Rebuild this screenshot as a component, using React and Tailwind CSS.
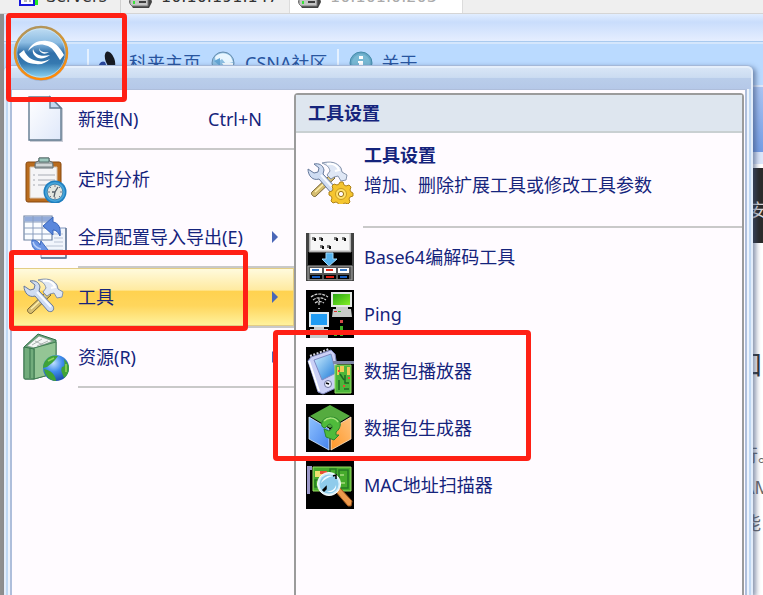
// Application menu of a network analyser, opened over its main window.

function LogoOrb() {
  return (
    <svg viewBox="0 0 56 56" className="h-14 w-14" aria-hidden="true">
      <defs>
        <linearGradient id="ring" x1="0" y1="0" x2="0.2" y2="1">
          <stop offset="0" stopColor="#a89466" />
          <stop offset="0.45" stopColor="#d9962e" />
          <stop offset="1" stopColor="#ff8a0a" />
        </linearGradient>
        <linearGradient id="orb" x1="0" y1="0" x2="0" y2="1">
          <stop offset="0" stopColor="#c3dff4" />
          <stop offset="0.3" stopColor="#8cbce2" />
          <stop offset="0.5" stopColor="#2f6fa9" />
          <stop offset="0.7" stopColor="#3579b0" />
          <stop offset="1" stopColor="#93dcf8" />
        </linearGradient>
      </defs>
      <circle cx="28" cy="29" r="27" fill="#6c7f9c" opacity="0.35" />
      <circle cx="28" cy="28" r="26" fill="url(#orb)" stroke="url(#ring)" strokeWidth="2.5" />
      <circle cx="28" cy="28" r="24.2" fill="none" stroke="#d6ecfa" strokeWidth="0.8" opacity="0.7" />
      <path d="M15 26C18 18 26 15 34 16c8 1 12 5 17 14l-4 5c-4-6-6-11-12-14-7-3-14-2-20 5z" fill="#fff" />
      <path d="M6 29l5-4c2 6 7 10 14 11 4 1 8 0 12-2-4 4-9 6-14 5-8 0-14-4-17-10z" fill="#fff" />
      <path d="M20 24c2 6 8 8 17 6-4 3-8 4-12 3-4-2-6-5-5-9z" fill="#fff" />
      <path d="M26 23c1 4 5 5 10 4-3 2-5 2-7 1-2-1-3-3-3-5z" fill="#fff" />
    </svg>
  );
}

function PageIcon() {
  return (
    <svg viewBox="0 0 48 48" className="h-12 w-12 shrink-0" aria-hidden="true">
      <defs>
        <linearGradient id="paper" x1="0" y1="0" x2="1" y2="1">
          <stop offset="0" stopColor="#fff" />
          <stop offset="1" stopColor="#dfe8fa" />
        </linearGradient>
      </defs>
      <path d="M8 3h20l13 11v33H8z" fill="#c9ccd6" />
      <path d="M7 2h21l11 11v32H7z" fill="url(#paper)" stroke="#61798f" strokeWidth="1.4" />
      <path d="M28 2v11h11z" fill="#c4d8ee" stroke="#61798f" strokeWidth="1.4" />
    </svg>
  );
}

function ClipboardIcon() {
  return (
    <svg viewBox="0 0 48 48" className="h-12 w-12 shrink-0" aria-hidden="true">
      <rect x="4" y="7" width="35" height="40" rx="2" fill="#b96b1e" stroke="#87480f" />
      <path d="M8 12h27v31H8z" fill="#f5f5f7" stroke="#d7c3ad" />
      <path d="M16 20h17M16 25h17M16 30h15M11 20h2M11 25h2M11 30h2" stroke="#a7abb3" strokeWidth="1" />
      <path d="M13 9c0-3 4-2 4-4V3h10v2c0 2 4 1 4 4v4H13z" fill="#a2aaab" stroke="#626c70" />
      <path d="M17 3h10v4H17z" fill="#9dc7bd" stroke="#56706f" />
      <path d="M14 10h16" stroke="#e2e6e7" strokeWidth="1.5" />
      <circle cx="33" cy="37" r="11.5" fill="#1f7fc0" />
      <circle cx="33" cy="37" r="10" fill="#48a5da" />
      <circle cx="33" cy="37" r="7.8" fill="#e3e6e0" stroke="#1f6f9f" strokeWidth="0.7" />
      <path d="M33 30v2M33 42v2M26 37h2M38 37h2M28 32l1 1M38 32l-1 1M28 42l1-1M38 42l-1-1" stroke="#778" />
      <path d="M36 32l-3 5-1 5M33 37h-3" stroke="#555f68" strokeWidth="1.3" fill="none" />
    </svg>
  );
}

function TableExchangeIcon() {
  return (
    <svg viewBox="0 0 48 48" className="h-12 w-12 shrink-0" aria-hidden="true">
      <path d="M19 15h25v30H19z" fill="#f1f5fc" stroke="#8096bd" />
      <path d="M19 45h25V15" fill="none" stroke="#5e7390" strokeWidth="1.4" />
      <path d="M32 21h9M32 25h9M32 29h9M24 33h17M24 37h17M28 41h13" stroke="#b9c3d4" strokeWidth="1.2" />
      <path d="M2 3h28v24H2z" fill="#fafcff" stroke="#7084a2" strokeWidth="1.2" />
      <path d="M2.500 3.500h27v5h-27z" fill="#93abda" />
      <path d="M2 9h28M2 15h28M2 21h28M11 3v24M20 3v24" stroke="#8b9ebe" strokeWidth="1" />
      <path d="M21 13l10-9v5c6 1 8 6 7 14-2-4-4-6-7-6v5z" fill="#5a87dc" stroke="#3765ba" />
      <path d="M10 27c4 0 7 2 8 5l1-4 7 9-9 4-1-3c-4-1-7-5-6-11z" fill="#6b94e4" stroke="#3d6cc0" />
      <path d="M11 29c1 4 4 6 8 7" fill="none" stroke="#b8d0fa" strokeWidth="1.5" />
    </svg>
  );
}

// Crossed wrench and hammer, shared by the menu row and the settings entry.
function CrossedTools() {
  return (
    <>
      <path d="M25 18l4 4L10 40c-2 2-6-2-4-4z" fill="#d6bd70" stroke="#776434" />
      <path d="M9 36l14-13" stroke="#fff0ae" strokeWidth="1.5" />
      <path
        d="M16 7c8-2 15-1 19 5l1 4 5 3-1 5-5 1-3-5-4 1-3 2-4-4 3-4c-1-4-3-6-8-8z"
        fill="#dfe7f5"
        stroke="#8593ab"
      />
      <path d="M21 8c6-1 10 1 12 6l-4 1" fill="none" stroke="#fff" strokeWidth="2" />
      <path
        d="M2 13l6 4 4-1 1-4-5-4c5-1 9 1 10 6l-1 4 14 15c2 4-1 7-5 5L13 23c-6 2-11-3-11-10z"
        fill="#cfdcf2"
        stroke="#66799b"
      />
      <path d="M15 19l14 15" stroke="#f7faff" strokeWidth="2" />
    </>
  );
}

function ToolsIcon() {
  return (
    <svg viewBox="0 0 48 48" className="h-12 w-12 shrink-0" aria-hidden="true">
      <CrossedTools />
    </svg>
  );
}

function ToolSettingsIcon() {
  return (
    <svg viewBox="0 0 48 48" className="h-12 w-12 shrink-0" aria-hidden="true">
      <CrossedTools />
      <path
        d="M34 26h3l1 3 2 1 3-1 2 2-1 3 1 2 2 1v3l-3 1-1 2 1 3-2 2-3-1-2 1-1 2h-3l-1-3-2-1-3 1-2-2 1-3-1-2-2-1v-3l3-1 1-2-1-3 2-2 3 1 2-1z"
        fill="#f5c52f"
        stroke="#b08319"
      />
      <circle cx="35" cy="38" r="5.500" fill="#ffe168" stroke="#c99b20" />
      <circle cx="35" cy="38" r="2.6" fill="#fffafc" stroke="#9b7210" />
    </svg>
  );
}

function BookGlobeIcon() {
  return (
    <svg viewBox="0 0 48 48" className="h-12 w-12 shrink-0" aria-hidden="true">
      <defs>
        <radialGradient id="globe" cx="0.4" cy="0.3" r="0.7">
          <stop offset="0" stopColor="#bfe0ff" />
          <stop offset="0.5" stopColor="#3f8cec" />
          <stop offset="1" stopColor="#1c51ae" />
        </radialGradient>
      </defs>
      <path d="M2 14L16 1l18 6v33L12 46H3c-1 0-1-1-1-2z" fill="#69a578" stroke="#316d49" />
      <path d="M5 13L17 3l14 5-18 7z" fill="#f4f6f5" stroke="#7b9384" strokeWidth="0.7" />
      <path d="M10 12l10-6M15 13l11-5M13 8l10 5" stroke="#9aa3a0" strokeWidth="0.8" />
      <path d="M12 15l22-6v31l-22 6z" fill="#94c595" stroke="#437d55" />
      <path d="M2 14l10 2v30H3c-1 0-1-1-1-2zM8 15v30" fill="#72ac7c" stroke="#39754d" />
      <circle cx="34" cy="35" r="13" fill="url(#globe)" />
      <path d="M24 27c4-5 9-5 12-4l-3 4-3 3-5 4-4 1c0-3 1-6 3-8zM22 36c5 1 8 3 10 6 1 2 2 4 2 6-6 0-11-5-12-12zM42 26c3 3 5 6 5 9 0 4-2 8-5 10-1-4-4-7-2-11 3 0 3-3 2-8z" fill="#3fa338" />
      <path d="M26 28l6-3M44 31v8" stroke="#8ed45c" strokeWidth="1.6" />
    </svg>
  );
}

function Base64Icon() {
  return (
    <svg viewBox="0 0 48 48" className="h-12 w-12 shrink-0" aria-hidden="true">
      <path d="M0 0h48v48H0z" fill="#000" />
      <path d="M1 0v48M47 0v48" stroke="#858585" />
      <path d="M3 0h42v19H3z" fill="#d9d9d9" stroke="#8c8c8c" />
      <path d="M5 1h38v16H5z" fill="#f7f7f7" />
      <path d="M6 4h3v3H6zM13 4h3v3h-3zM28 4h3v3h-3zM36 4h3v3h-3zM14 12h3v3h-3zM21 12h3v3h-3z" fill="#777" />
      <path d="M8 5h2v3H8zM15 5h2v3h-2zM30 5h2v3h-2zM38 5h2v3h-2zM16 13h2v3h-2zM23 13h2v3h-2z" fill="#111" />
      <path d="M20 20h7v6h4l-8 7-7-7h4z" fill="#55b3ee" stroke="#a0d9fa" />
      <path d="M2 33h44v14H2z" fill="#555" stroke="#aaa" />
      <path d="M4 35h12v5H4zM18 35h12v5H18zM32 35h11v5H32z" fill="#fff" />
      <path d="M6 36h7v2H6zM34 36h7v2h-7z" fill="#3b7cca" />
      <path d="M20 36h7v2h-7z" fill="#e32e20" />
      <path d="M4 42h12v4H4zM18 42h12v4H18zM32 42h11v4H32z" fill="#000" />
      <path d="M6 43h8v2H6zM34 43h7v2h-7z" fill="#145cc0" />
      <path d="M20 43h8v2h-8z" fill="#df1f12" />
    </svg>
  );
}

function PingIcon() {
  return (
    <svg viewBox="0 0 48 48" className="h-12 w-12 shrink-0" aria-hidden="true">
      <defs>
        <linearGradient id="greenScreen" x1="0" y1="0" x2="1" y2="1">
          <stop offset="0" stopColor="#2ba713" />
          <stop offset="1" stopColor="#82ef27" />
        </linearGradient>
      </defs>
      <path d="M0 0h48v48H0z" fill="#000" />
      <path d="M5 7c5-4 12-4 17 0M7 10c4-3 9-3 13 0M9 13c3-2 6-2 9 0M13 8v7" fill="none" stroke="#d6d6d6" strokeWidth="1.2" strokeDasharray="3 1" />
      <path d="M12 18h2v1h-2z" fill="#999" />
      <path d="M25 2h21v15H25z" fill="#e4e8e4" />
      <path d="M27 4h17v11H27z" fill="url(#greenScreen)" />
      <path d="M30 17h12v2H30zM27 19h18l1 8H26z" fill="#c8cac8" />
      <path d="M28 21h3v1h-3z" fill="#df3029" />
      <path d="M32 21h3v1h-3z" fill="#37c030" />
      <path d="M3 22h20v15H3z" fill="#dce8ef" />
      <path d="M5 24h16v11H5z" fill="#209cf4" />
      <path d="M8 37h10v2H8zM4 39h18v9H4z" fill="#c7c9ca" />
      <path d="M34 30h3v3h-3z" fill="#d64a48" />
      <path d="M34 36h3v4h-3zM28 44h3v2h-3zM34 43h3v3h-3z" fill="#42b429" />
    </svg>
  );
}

function PacketPlayerIcon() {
  return (
    <svg viewBox="0 0 48 48" className="h-12 w-12 shrink-0" aria-hidden="true">
      <defs>
        <linearGradient id="pda" x1="0" y1="0" x2="1" y2="1">
          <stop offset="0" stopColor="#d0f0ff" />
          <stop offset="1" stopColor="#1b79d8" />
        </linearGradient>
      </defs>
      <path d="M0 0h48v48H0z" fill="#000" />
      <path d="M2 14l3-4L25 3l4 4 5 32-17 8-5-2z" fill="#cbd0f6" stroke="#7f86bd" />
      <path d="M3 14l10 30" stroke="#fff" strokeWidth="2" />
      <path d="M8 13l17-6 5 19-14 7z" fill="url(#pda)" stroke="#7c89c4" />
      <path d="M4 9l19-7" stroke="#d6d6e3" strokeWidth="2" strokeDasharray="2 1.500" />
      <circle cx="22" cy="37" r="3.500" fill="#eef0ff" stroke="#6a719b" />
      <path d="M20 36l3 1" stroke="#000" strokeWidth="1.5" />
      <path d="M27 14h21v3H27z" fill="#7e85a5" />
      <path d="M29 18h16v28H29z" fill="#4cb63a" stroke="#95dd65" />
      <path d="M34 19h4v6h-4zM41 20h3v8h-3zM31 20h2v8h-2z" fill="#efca55" />
      <path d="M33 33v10M39 28v8h4M34 27l4 6M38 42h5" fill="none" stroke="#1d6a24" strokeWidth="1.5" />
      <path d="M32 24h2M42 31h2M37 39h2" stroke="#e84936" strokeWidth="2" />
    </svg>
  );
}

function PacketBuilderIcon() {
  return (
    <svg viewBox="0 0 48 48" className="h-12 w-12 shrink-0" aria-hidden="true">
      <defs>
        <linearGradient id="cubeLeft" x1="0" y1="0" x2="1" y2="1">
          <stop offset="0" stopColor="#8fc2ff" />
          <stop offset="1" stopColor="#4583ec" />
        </linearGradient>
        <linearGradient id="cubeRight" x1="1" y1="0" x2="0" y2="1">
          <stop offset="0" stopColor="#ffc27c" />
          <stop offset="1" stopColor="#ff9626" />
        </linearGradient>
      </defs>
      <path d="M0 0h48v48H0z" fill="#000" />
      <path d="M24 1l20 11-20 12L4 12z" fill="#55ab3f" />
      <path d="M3 13l20 12v21L3 35z" fill="url(#cubeLeft)" stroke="#d9ecff" strokeWidth="0.8" />
      <path d="M45 13L25 25v21l20-11z" fill="url(#cubeRight)" stroke="#ffe9cc" strokeWidth="0.8" />
      <path
        d="M16 18c2-6 15-7 18 0 1 4-1 8-4 10v3h3l-5 5-8-3-2-8 5 2c4-2 4-6 1-7-3 0-3 4-6 4-2-1-3-3-2-6z"
        fill="#4fbb3b"
        stroke="#2b8430"
      />
      <path d="M18 17c4-4 11-4 14 1" fill="none" stroke="#a9e47c" strokeWidth="1.5" />
    </svg>
  );
}

function MacScannerIcon() {
  return (
    <svg viewBox="0 0 48 48" className="h-12 w-12 shrink-0" aria-hidden="true">
      <path d="M0 0h48v48H0z" fill="#000" />
      <path d="M1 5h3v28H1zM4 5h2v4H4z" fill="#9c98c9" />
      <path d="M7 6h38v24H7z" fill="#46ab2c" stroke="#9ddd63" />
      <path d="M9 10h9v6H9z" fill="#efe16f" />
      <path d="M14 10h7v3h-7z" fill="#e85235" />
      <path d="M33 9h9v18h-9zM9 19h8v7H9zM24 8h6v8h-6z" fill="none" stroke="#247a23" strokeWidth="1.5" />
      <path d="M34 14h4M35 22h4" stroke="#d9f2aa" />
      <path d="M30 31l4-4 12 13-1 5h-3z" fill="#ed9a4d" stroke="#9c541b" />
      <circle cx="23" cy="23" r="11.5" fill="#d3eefa" stroke="#fff" strokeWidth="1" />
      <circle cx="23" cy="23" r="9.500" fill="#8fcbeb" />
      <path d="M15 22c2-6 8-9 12-7-5 1-9 4-12 7zM20 30c5 1 9-2 10-6 1 5-4 9-10 6z" fill="#f1fbff" />
      <path d="M27 15l3-1v4M17 29l3-3v2l-2 2z" fill="none" stroke="#000" strokeWidth="1.5" />
    </svg>
  );
}

function DriveIcon() {
  return (
    <svg viewBox="0 0 24 20" className="h-5 w-6 shrink-0" aria-hidden="true">
      <path d="M3 5h18l2 8-3 6H4l-4-6z" fill="#444" />
      <path d="M1 10h18v7H3l-2-2z" fill="#c5c5c5" stroke="#777" />
      <path d="M10 13h7" stroke="#111" strokeWidth="1.5" />
      <path d="M4 12h2v3H4z" fill="#38e438" />
    </svg>
  );
}

function ServersIcon() {
  return (
    <svg viewBox="0 0 24 20" className="h-5 w-6 shrink-0" aria-hidden="true">
      <path d="M2 4h14v12H2z" fill="#fff" stroke="#1717dc" strokeWidth="2" />
      <path d="M6 12h3M11 12h2" stroke="#777" />
      <path d="M17 11h3v5h-3z" fill="#20e824" />
    </svg>
  );
}

function HomeLinkIcon() {
  return (
    <svg viewBox="0 0 24 24" className="h-6 w-6 shrink-0" aria-hidden="true">
      <ellipse cx="13" cy="9" rx="4.500" ry="9" fill="#171b22" transform="rotate(-20 13 9)" />
      <path d="M1 19c0-7 4-10 7-8l3 8-8 2z" fill="#28469c" />
    </svg>
  );
}

function CommunityIcon() {
  return (
    <svg viewBox="0 0 24 24" className="h-6 w-6 shrink-0" aria-hidden="true">
      <circle cx="12" cy="12" r="11" fill="#8dbfe2" stroke="#688dae" />
      <path d="M4 6c4-5 12-5 16 0l2 5-7 2-4-5-6 4z" fill="#e8f6ff" />
      <path d="M11 12h11v3H13z" fill="#f4fbff" />
      <path d="M3 10l6-3v8z" fill="#64a5d3" />
    </svg>
  );
}

function AboutIcon() {
  return (
    <svg viewBox="0 0 24 24" className="h-6 w-6 shrink-0" aria-hidden="true">
      <circle cx="12" cy="12" r="11" fill="#65a7c5" stroke="#438bab" />
      <circle cx="12" cy="12" r="9" fill="#78b8d3" />
      <path d="M10 5h4v3h-4zM9 10h5v9h-4v-7H9z" fill="#fff" />
    </svg>
  );
}

function SubmenuArrow() {
  return (
    <svg viewBox="0 0 6 12" className="ml-auto mr-4 h-3 w-1.5 shrink-0" aria-hidden="true">
      <path d="M0 0l6 6-6 6z" fill="#4a67b7" />
    </svg>
  );
}

const MENU = [
  { label: '新建(N)', icon: PageIcon, shortcut: 'Ctrl+N', divider: true },
  { label: '定时分析', icon: ClipboardIcon },
  { label: '全局配置导入导出(E)', icon: TableExchangeIcon, submenu: true, divider: true },
  { label: '工具', icon: ToolsIcon, submenu: true, active: true, divider: true },
  { label: '资源(R)', icon: BookGlobeIcon, submenu: true, divider: true },
];

const TOOLS = [
  { label: 'Base64编解码工具', icon: Base64Icon },
  { label: 'Ping', icon: PingIcon },
  { label: '数据包播放器', icon: PacketPlayerIcon },
  { label: '数据包生成器', icon: PacketBuilderIcon },
  { label: 'MAC地址扫描器', icon: MacScannerIcon },
];

function MenuRow({ item }) {
  const RowIcon = item.icon;
  return (
    <li>
      <button
        type="button"
        className={`flex h-[58px] w-full items-center gap-2 pl-2.5 text-left ${
          item.active
            ? 'bg-[linear-gradient(#fffbe0_0%,#ffeaa0_38%,#ffd250_40%,#ffd65c_65%,#fff3a0_100%)] outline-1 -outline-offset-1 outline-[#e3cd85]'
            : ''
        }`}
      >
        <RowIcon />
        <span className="whitespace-nowrap">{item.label}</span>
        {item.shortcut && <span className="ml-auto mr-8">{item.shortcut}</span>}
        {item.submenu && <SubmenuArrow />}
      </button>
      {item.divider && <div className="ml-[66px] h-0.5 bg-[#c9c9c9]" />}
    </li>
  );
}

function ToolRow({ item }) {
  const RowIcon = item.icon;
  return (
    <li>
      <button type="button" className="flex h-[57px] w-full items-center gap-2.5 pl-2.5 text-left">
        <RowIcon />
        <span>{item.label}</span>
      </button>
    </li>
  );
}

function TabStrip() {
  return (
    <nav className="flex h-3.5 items-end overflow-hidden border-b border-[#d5d5d5] bg-[#efefef] pl-1 font-['DejaVu_Sans'] text-lg leading-5 text-[#333]">
      <a href="#servers" className="flex w-[117px] items-end gap-1 border-r border-[#d0d0d0] pb-1 pl-3.5">
        <ServersIcon />
        <span className="pb-0.5 text-base leading-5">Servers</span>
      </a>
      <a href="#host-a" className="flex w-[168px] items-end gap-2 pb-1 pl-2">
        <DriveIcon />
        <span className="pb-0.5 text-base leading-5">10.10.191.147</span>
      </a>
      <a href="#host-b" className="flex w-[174px] items-end gap-2 border-x border-[#dcdcdc] bg-white pb-1 pl-2 text-[#aaa]">
        <DriveIcon />
        <span className="pb-0.5 text-base leading-5">10.101.0.203</span>
      </a>
    </nav>
  );
}

function Toolbar() {
  return (
    <nav className="flex h-[43px] items-center border-t-2 border-[#d4e6fc] bg-[#badaff] pb-1 pl-[83px] text-lg text-[#28559f]">
      <span className="mr-2 h-7 w-0.5 bg-[#e5f1ff]" />
      <a href="#home" className="flex items-center gap-2">
        <HomeLinkIcon />
        科来主页
      </a>
      <a href="#community" className="ml-2.5 flex items-center gap-2.5">
        <CommunityIcon />
        CSNA社区
      </a>
      <span className="mx-2.5 h-7 w-0.5 bg-[#e5f1ff]" />
      <a href="#about" className="flex items-center gap-2">
        <AboutIcon />
        关于
      </a>
    </nav>
  );
}

// Slice of the start page that stays visible beside the menu.
function StartPage() {
  return (
    <div className="flex flex-1 justify-end bg-white">
      <div className="w-6 overflow-hidden whitespace-nowrap text-lg text-[#68686c]">
        <div className="h-[67px] border-t-2 border-[#dce8fb] bg-linear-to-b from-[#a9c4f2] to-[#749de4]" />
        <div className="h-3 bg-[#dbe6fa]" />
        <div className="mt-1 h-[75px] bg-[#2b2b2b] pl-2.5 pt-7 text-[#d8d8dc]">安</div>
        <p className="-ml-1 pt-[100px] text-[28px] text-[#333]">口</p>
        <p className="pl-px pt-[54px]">行。</p>
        <p className="pl-1 pt-1">AM</p>
        <p className="pl-1 pt-2">能</p>
      </div>
    </div>
  );
}

function ApplicationMenu() {
  return (
    <div className="absolute bottom-0 left-1 right-[10px] top-[65px] flex flex-col rounded-t-md border-t border-[#a5b8d8] bg-[#bfd8f3] text-lg text-[#15247c] shadow-[3px_2px_5px_rgba(60,80,120,0.6)]">
      <div className="h-[23px] shrink-0 rounded-t-md border-2 border-b-0 border-[#e6effb] bg-[linear-gradient(#d8e5f6_0%,#cbdcf1_45%,#b9cdea_50%,#b5c8e8_100%)]" />
      <div className="flex flex-1 border-x-2 border-[#e3edfa] px-0.5">
        <div className="flex flex-1 border-x-2 border-[#edf3fc]">
          <div className="flex flex-1 border-x-2 border-t border-[#aebedb] bg-[#fffbff] pr-px">
            <ul className="w-[282px] shrink-0">
              {MENU.map((item) => (
                <MenuRow key={item.label} item={item} />
              ))}
            </ul>
            <section className="mt-[3px] min-w-0 flex-1 rounded-t-sm border-2 border-b-0 border-[#9b9b9b]">
              <h2 className="flex h-[38px] items-center border-b-2 border-[#c9d0d2] bg-[#dee6ef] pl-3 font-bold">
                工具设置
              </h2>
              <button type="button" className="flex h-[93px] w-full items-center gap-2.5 pl-2.5 text-left">
                <ToolSettingsIcon />
                <span className="pb-5 leading-[30px]">
                  <strong className="block">工具设置</strong>
                  <span className="block">增加、删除扩展工具或修改工具参数</span>
                </span>
              </button>
              <div className="ml-[67px] h-0.5 bg-[#c9c9c9]" />
              <ul>
                {TOOLS.map((item) => (
                  <ToolRow key={item.label} item={item} />
                ))}
              </ul>
            </section>
          </div>
        </div>
      </div>
    </div>
  );
}

export default function App() {
  return (
    <div className="relative flex min-h-screen flex-col overflow-hidden bg-[#8f8f8f] font-['Noto_Sans','Noto_Sans_CJK_SC',sans-serif]">
      <TabStrip />
      <div className="ml-1 flex flex-1 flex-col">
        <div className="h-7 border-b border-[#a9caef] bg-[linear-gradient(#e1edff_0%,#c9ddfc_30%,#e5eeff_100%)]" />
        <Toolbar />
        <StartPage />
      </div>
      <ApplicationMenu />

      <button type="button" aria-label="应用程序菜单" className="absolute left-[13px] top-[25px] rounded-full">
        <LogoOrb />
      </button>

      {/* Highlight frames */}
      <div className="pointer-events-none absolute left-1.5 top-[13px] h-[89px] w-[121px] rounded border-[5px] border-[#ff2015]" />
      <div className="pointer-events-none absolute left-[9px] top-[250px] h-[81px] w-[239px] rounded border-[5px] border-[#ff2015]" />
      <div className="pointer-events-none absolute left-[273px] top-[330px] h-[131px] w-[258px] rounded border-[5px] border-[#ff2015]" />
    </div>
  );
}
